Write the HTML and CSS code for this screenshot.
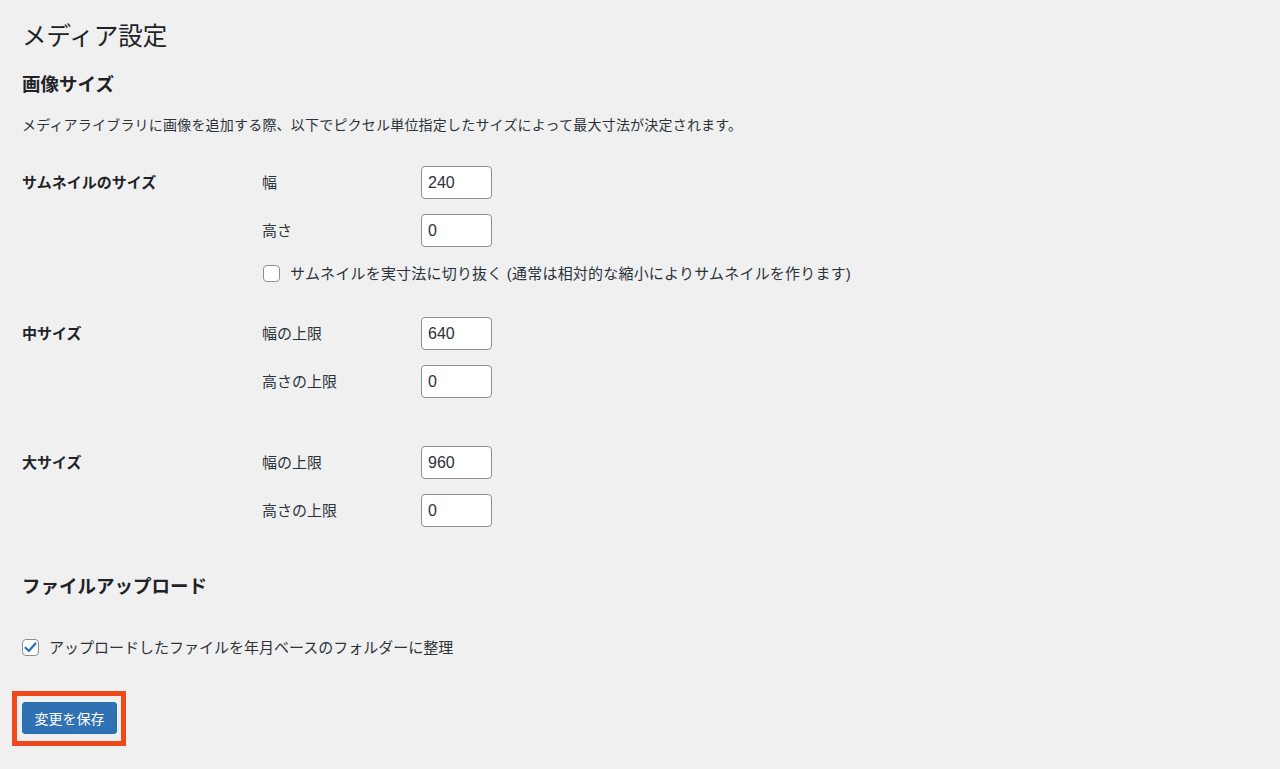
FILE: index.html
```html
<!DOCTYPE html>
<html lang="ja">
<head>
  <meta charset="UTF-8">
  <meta name="viewport" content="width=device-width, initial-scale=1.0">
  <title>メディア設定</title>
  <link rel="stylesheet" href="styles.css">
</head>
<body>
  <div class="wrap">
    <h1>メディア設定</h1>

    <h2 class="sec-title">画像サイズ</h2>
    <p class="desc">メディアライブラリに画像を追加する際、以下でピクセル単位指定したサイズによって最大寸法が決定されます。</p>

    <div class="setting first">
      <div class="setting-name">サムネイルのサイズ</div>
      <div class="fields">
        <div class="field">
          <label class="field-label">幅</label>
          <input type="text" class="num" value="240">
        </div>
        <div class="field">
          <label class="field-label">高さ</label>
          <input type="text" class="num" value="0">
        </div>
        <label class="check crop">
          <span class="box"></span>
          <span>サムネイルを実寸法に切り抜く (通常は相対的な縮小によりサムネイルを作ります)</span>
        </label>
      </div>
    </div>

    <div class="setting medium">
      <div class="setting-name">中サイズ</div>
      <div class="fields">
        <div class="field">
          <label class="field-label">幅の上限</label>
          <input type="text" class="num" value="640">
        </div>
        <div class="field">
          <label class="field-label">高さの上限</label>
          <input type="text" class="num" value="0">
        </div>
      </div>
    </div>

    <div class="setting large">
      <div class="setting-name">大サイズ</div>
      <div class="fields">
        <div class="field">
          <label class="field-label">幅の上限</label>
          <input type="text" class="num" value="960">
        </div>
        <div class="field">
          <label class="field-label">高さの上限</label>
          <input type="text" class="num" value="0">
        </div>
      </div>
    </div>

    <h2 class="sec-title upload">ファイルアップロード</h2>

    <label class="check folders">
      <span class="box checked">
        <svg width="13" height="11" viewBox="0 0 13 11"><path d="M1.5 5.8 L4.8 9 L11.5 1.5" fill="none" stroke="#2271b1" stroke-width="2.2" stroke-linecap="round" stroke-linejoin="round"/></svg>
      </span>
      <span>アップロードしたファイルを年月ベースのフォルダーに整理</span>
    </label>

    <div class="highlight">
      <button class="primary">変更を保存</button>
    </div>
  </div>
</body>
</html>
```

FILE: styles.css
```css
body {
  margin: 0;
  background: #f0f0f1;
  color: #1d2327;
  font-family: "Liberation Sans", "Noto Sans CJK JP", sans-serif;
}
.wrap {
  padding: 0 22px;
}
h1 {
  margin: 22px 0 0;
  font-size: 24.5px;
  font-weight: 400;
  line-height: 29px;
}
.sec-title {
  margin: 22px 0 0;
  font-size: 18.5px;
  font-weight: 700;
  line-height: 24px;
}
.desc {
  margin: 18px 0 0;
  font-size: 14px;
  line-height: 20px;
  letter-spacing: 0.2px;
  color: #2c3338;
}
.setting {
  display: grid;
  grid-template-columns: 240px 1fr;
}
.setting.first {
  margin-top: 31px;
}
.setting.medium {
  margin-top: 35px;
}
.setting.large {
  margin-top: 48px;
}
.setting-name {
  font-size: 15px;
  font-weight: 700;
  line-height: 33px;
}
.fields {
  display: flex;
  flex-direction: column;
  gap: 15px;
}
.field {
  display: flex;
  align-items: center;
}
.field-label {
  width: 159px;
  font-size: 15px;
  line-height: 33px;
  color: #2c3338;
}
.num {
  box-sizing: border-box;
  width: 71px;
  height: 33px;
  padding: 0 6px;
  border: 1px solid #8c8f94;
  border-radius: 4px;
  background: #fff;
  font-family: "Liberation Sans", sans-serif;
  font-size: 16px;
  color: #2c3338;
}
.check {
  display: flex;
  align-items: center;
  gap: 10px;
  font-size: 15px;
  line-height: 17px;
  color: #2c3338;
}
.check.crop {
  margin-top: 3px;
  margin-left: 1px;
  letter-spacing: 0.2px;
}
.box {
  box-sizing: border-box;
  width: 17px;
  height: 17px;
  border: 1px solid #8c8f94;
  border-radius: 4px;
  background: #fff;
  display: flex;
  align-items: center;
  justify-content: center;
  flex: none;
}
.upload {
  margin-top: 48px;
}
.check.folders {
  margin-top: 40px;
}
.highlight {
  display: inline-block;
  margin: 35px 0 0 -10px;
  padding: 6px 4px 7px 5px;
  border: 5px solid #f0481d;
}
.primary {
  display: block;
  width: 95px;
  height: 32px;
  border: 1px solid #2271b1;
  border-radius: 3px;
  background: #3071b3;
  color: #fff;
  font-family: "Noto Sans CJK JP", sans-serif;
  font-size: 14px;
  cursor: pointer;
}
```
